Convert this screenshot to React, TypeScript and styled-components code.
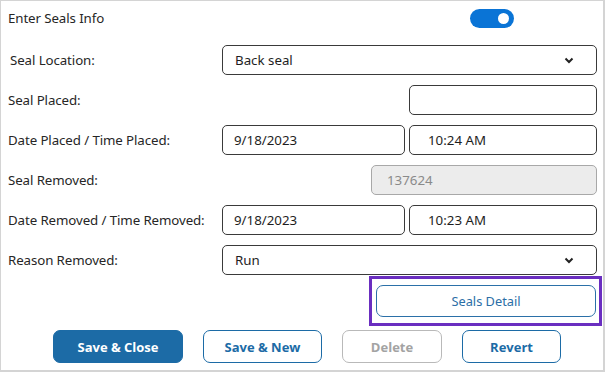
import React from "react";
import styled, { createGlobalStyle } from "styled-components";

const Global = createGlobalStyle`
  html, body { margin: 0; padding: 0; background: #ffffff; }
  body { font-family: "Noto Sans", "Open Sans", sans-serif; }
  * { box-sizing: border-box; }
`;

const Panel = styled.div`
  width: 605px;
  height: 372px;
  border: 1px solid #d4d4d4;
  border-width: 1px 2px 2px 1px;
  padding: 0 6px 0 7px;
  display: flex;
  flex-direction: column;
  background: #fff;
`;

const HeaderRow = styled.div`
  height: 34px;
  display: grid;
  grid-template-columns: 1fr 44px;
  align-items: center;
  padding-right: 83px;
`;

const Label = styled.div<{ $indent?: number }>`
  font-size: 13.3px;
  color: #262626;
  padding-left: ${(p) => p.$indent ?? 0}px;
  white-space: nowrap;
  letter-spacing: -0.1px;
`;

const Toggle = styled.div`
  width: 44px;
  height: 19px;
  border-radius: 10px;
  background: #0a74d6;
  display: flex;
  align-items: center;
  justify-content: flex-end;
  padding-right: 5px;
`;

const Knob = styled.div`
  width: 11px;
  height: 11px;
  border-radius: 50%;
  background: #fff;
`;

const Form = styled.div`
  margin-top: 10px;
  display: flex;
  flex-direction: column;
  gap: 10px;
`;

const Row = styled.div`
  display: grid;
  grid-template-columns: 214px 1fr;
  align-items: center;
  height: 30px;
`;

const Fields = styled.div`
  display: flex;
  justify-content: flex-end;
  gap: 4px;
  height: 30px;
`;

const Box = styled.div<{ $w?: number; $pad?: number; $disabled?: boolean }>`
  ${(p) => (p.$w ? `width: ${p.$w}px;` : "flex: 1;")}
  height: 30px;
  border: 1px solid ${(p) => (p.$disabled ? "#a8a8a8" : "#3a3a3a")};
  border-radius: 5px;
  background: ${(p) => (p.$disabled ? "#ececec" : "#fff")};
  color: ${(p) => (p.$disabled ? "#8a8a8a" : "#1e1e1e")};
  font-size: 13.3px;
  display: flex;
  align-items: center;
  padding-left: ${(p) => p.$pad ?? 11}px;
  padding-right: 22px;
  justify-content: space-between;
  white-space: nowrap;
`;

const HighlightRow = styled.div`
  display: flex;
  justify-content: flex-end;
  margin-right: -5px;
  margin-top: 1px;
`;

const Highlight = styled.div`
  width: 233px;
  height: 50px;
  border: 3px solid #6a2ec0;
  padding: 6px 3px 6px 4px;
`;

const DetailButton = styled.div`
  height: 32px;
  border: 1px solid #2b70a8;
  border-radius: 7px;
  color: #2b6ea6;
  font-size: 12.8px;
  display: flex;
  align-items: center;
  justify-content: center;
`;

const ButtonBar = styled.div`
  display: flex;
  gap: 20px;
  padding-left: 45px;
  margin-top: 4px;
`;

const ActionButton = styled.div<{ $w: number; $variant: "primary" | "outline" | "disabled" }>`
  width: ${(p) => p.$w}px;
  height: 33px;
  border-radius: 7px;
  font-family: "Open Sans", "Noto Sans", sans-serif;
  font-weight: 700;
  font-size: 13px;
  display: flex;
  align-items: center;
  justify-content: center;
  border: 1px solid
    ${(p) => (p.$variant === "disabled" ? "#b9b9b9" : "#1c6ba6")};
  background: ${(p) => (p.$variant === "primary" ? "#1c6ba6" : "#fff")};
  color: ${(p) =>
    p.$variant === "primary" ? "#fff" : p.$variant === "disabled" ? "#a3a3a3" : "#1c6ba6"};
`;

const Chevron = () => (
  <svg width="10" height="7" viewBox="0 0 10 7">
    <polyline points="1.5,1.5 5,5 8.5,1.5" fill="none" stroke="#222" strokeWidth="2" />
  </svg>
);

export default function App() {
  return (
    <>
      <Global />
      <Panel>
        <HeaderRow>
          <Label>Enter Seals Info</Label>
          <Toggle>
            <Knob />
          </Toggle>
        </HeaderRow>
        <Form>
          <Row>
            <Label $indent={2}>Seal Location:</Label>
            <Fields>
              <Box $pad={12}>
                Back seal
                <Chevron />
              </Box>
            </Fields>
          </Row>
          <Row>
            <Label>Seal Placed:</Label>
            <Fields>
              <Box $w={188} />
            </Fields>
          </Row>
          <Row>
            <Label>Date Placed / Time Placed:</Label>
            <Fields>
              <Box $pad={11}>9/18/2023</Box>
              <Box $w={188} $pad={18}>10:24 AM</Box>
            </Fields>
          </Row>
          <Row>
            <Label>Seal Removed:</Label>
            <Fields>
              <Box $w={226} $pad={15} $disabled>
                137624
              </Box>
            </Fields>
          </Row>
          <Row>
            <Label>Date Removed / Time Removed:</Label>
            <Fields>
              <Box $pad={11}>9/18/2023</Box>
              <Box $w={188} $pad={18}>10:23 AM</Box>
            </Fields>
          </Row>
          <Row>
            <Label>Reason Removed:</Label>
            <Fields>
              <Box $pad={12}>
                Run
                <Chevron />
              </Box>
            </Fields>
          </Row>
        </Form>
        <HighlightRow>
          <Highlight>
            <DetailButton>Seals Detail</DetailButton>
          </Highlight>
        </HighlightRow>
        <ButtonBar>
          <ActionButton $w={130} $variant="primary">Save &amp; Close</ActionButton>
          <ActionButton $w={119} $variant="outline">Save &amp; New</ActionButton>
          <ActionButton $w={100} $variant="disabled">Delete</ActionButton>
          <ActionButton $w={99} $variant="outline">Revert</ActionButton>
        </ButtonBar>
      </Panel>
    </>
  );
}
